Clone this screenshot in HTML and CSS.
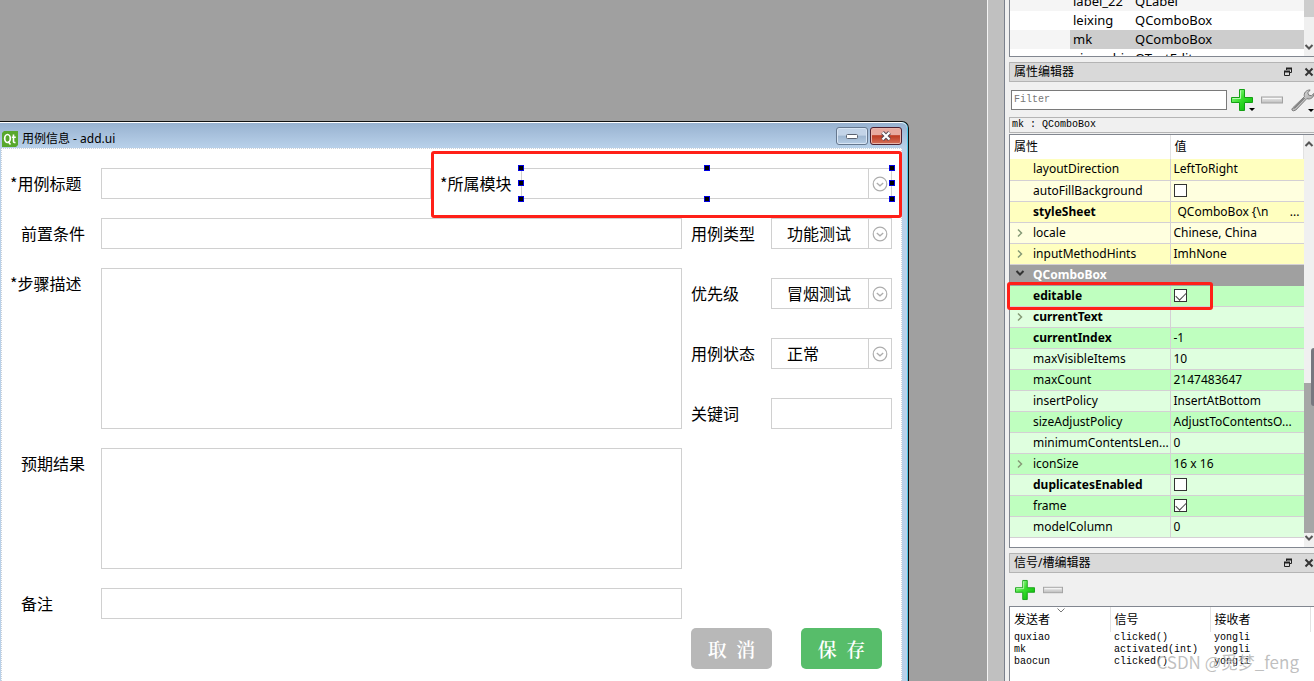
FILE: index.html
```
<!DOCTYPE html>
<html lang="zh-CN">
<head>
<meta charset="utf-8">
<title>用例信息 - add.ui</title>
<link rel="stylesheet" href="styles.css">
</head>
<body>
<svg class="defs" aria-hidden="true">
  <defs>
    <linearGradient id="green" x1="0" y1="0" x2="1" y2="1"><stop offset="0" stop-color="#b5ffb0"/><stop offset=".45" stop-color="#3be02f"/><stop offset="1" stop-color="#00b400"/></linearGradient>
    <linearGradient id="silver" x1="0" y1="0" x2="0" y2="1"><stop offset="0" stop-color="#eeeeee"/><stop offset="1" stop-color="#bdbdbd"/></linearGradient>
    <linearGradient id="steel" x1="0" y1="0" x2="1" y2="1"><stop offset="0" stop-color="#f4f4f4"/><stop offset="1" stop-color="#8c8c8c"/></linearGradient>
  </defs>
  <symbol id="plus" viewBox="0 0 22 22"><path d="M8.500.5h5v8h8v5h-8v8h-5v-8h-8v-5h8z" fill="url(#green)" stroke="#14a014"/><path d="M9.500 1.500v8h-8" fill="none" stroke="#d0ffcc" opacity=".8"/></symbol>
  <symbol id="minus" viewBox="0 0 22 8"><rect x=".5" y="1" width="21" height="6" fill="url(#silver)" stroke="#a2a2a2"/><path d="M2 2.500h18" stroke="#f8f8f8"/></symbol>
  <symbol id="float" viewBox="0 0 10 10"><path d="M3.500 3V1.500h5v4H7M1.500 4.500h5v4h-5z" fill="none" stroke="#222"/><path d="M3 1.500h6M1 4.500h6" stroke="#222" stroke-width="2"/></symbol>
  <symbol id="close" viewBox="0 0 10 10"><path d="M1.500 1.500l7 7m0-7l-7 7" stroke="#333" stroke-width="2"/></symbol>
  <symbol id="down" viewBox="0 0 10 10"><path d="M1.500 3L5 6.500 8.500 3" fill="none" stroke="currentColor" stroke-width="2"/></symbol>
  <symbol id="up" viewBox="0 0 10 10"><path d="M1.500 7L5 3.500 8.500 7" fill="none" stroke="currentColor" stroke-width="2"/></symbol>
  <symbol id="right" viewBox="0 0 10 10"><path d="M3 1.500L6.500 5 3 8.500" fill="none" stroke="currentColor" stroke-width="1.500"/></symbol>
  <symbol id="circle-down" viewBox="0 0 16 16"><circle cx="8" cy="8" r="6.800" fill="none" stroke="#adadad" stroke-width="1.200"/><path d="M4.800 7L8 9.800 11.200 7" fill="none" stroke="#adadad" stroke-width="1.300"/></symbol>
</svg>
<div class="page">
  <main class="canvas">
    <section class="window">
      <header class="titlebar">
        <svg class="logo" viewBox="0 0 16 16"><path d="M2 0h14v14l-2 2H0V2z" fill="#58a82d"/><ellipse cx="5.500" cy="7.500" rx="2.800" ry="4" fill="none" stroke="#fff" stroke-width="1.700"/><path d="M6 10.500l2.500 3M11.500 3.500v7q0 1.300 2 1M9.800 6.200h4" fill="none" stroke="#fff" stroke-width="1.600"/></svg>
        <h1>用例信息 - add.ui</h1>
        <button class="winbtn" aria-label="最小化"><svg width="12" height="8" viewBox="0 0 12 8"><rect x=".5" y="2.500" width="11" height="4" rx="1" fill="#fff" stroke="#5a6270"/></svg></button>
        <button class="winbtn winbtn-close" aria-label="关闭"><svg width="12" height="10" viewBox="0 0 12 10"><path d="M2.500 1.500l7 7m0-7l-7 7" stroke="#554a55" stroke-width="4"/><path d="M2.500 1.500l7 7m0-7l-7 7" stroke="#fff" stroke-width="2.200"/></svg></button>
      </header>
      <form class="form">
        <div class="row">
          <label class="label starred" for="title">*用例标题</label>
          <input class="field" id="title" type="text">
          <div class="module">
            <label class="module-label" for="mk">*所属模块</label>
            <div class="combo selected">
              <select id="mk"><option></option></select>
              <span class="drop"><svg><use href="#circle-down"/></svg></span>
              <i class="handle t l"></i><i class="handle t c"></i><i class="handle t r"></i>
              <i class="handle m l"></i><i class="handle m r"></i>
              <i class="handle b l"></i><i class="handle b c"></i><i class="handle b r"></i>
            </div>
            <div class="mark mark-module"></div>
          </div>
        </div>
        <div class="columns">
          <div class="main-column">
            <div class="row"><label class="label" for="pre">前置条件</label><input class="field" id="pre" type="text"></div>
            <div class="row"><label class="label starred" for="steps">*步骤描述</label><textarea class="field steps" id="steps"></textarea></div>
            <div class="row"><label class="label" for="expect">预期结果</label><textarea class="field expect" id="expect"></textarea></div>
            <div class="row"><label class="label" for="note">备注</label><input class="field" id="note" type="text"></div>
          </div>
          <div class="side-column">
            <div class="row"><label class="side-label" for="leixing">用例类型</label><div class="combo"><select id="leixing"><option>功能测试</option></select><span class="drop"><svg><use href="#circle-down"/></svg></span></div></div>
            <div class="row"><label class="side-label" for="level">优先级</label><div class="combo"><select id="level"><option>冒烟测试</option></select><span class="drop"><svg><use href="#circle-down"/></svg></span></div></div>
            <div class="row"><label class="side-label" for="state">用例状态</label><div class="combo"><select id="state"><option>正常</option></select><span class="drop"><svg><use href="#circle-down"/></svg></span></div></div>
            <div class="row"><label class="side-label" for="keyword">关键词</label><input class="field" id="keyword" type="text"></div>
            <div class="actions"><button type="button" class="action cancel">取&nbsp; 消</button><button type="button" class="action save">保&nbsp; 存</button></div>
          </div>
        </div>
      </form>
    </section>
  </main>
  <div class="splitter"></div>
  <aside class="dock">
    <section class="tree">
      <table>
        <tr><td></td><td>label_22</td><td>QLabel</td></tr>
        <tr><td></td><td>leixing</td><td>QComboBox</td></tr>
        <tr class="current"><td></td><td>mk</td><td>QComboBox</td></tr>
        <tr><td></td><td>xiangshi</td><td>QTextEdit</td></tr>
      </table>
      <div class="scroll tree-scroll"><span class="thumb"></span><svg><use href="#down"/></svg></div>
    </section>

    <header class="dock-title"><h2>属性编辑器</h2><button aria-label="浮动"><svg><use href="#float"/></svg></button><button aria-label="关闭"><svg><use href="#close"/></svg></button></header>
    <div class="toolbar">
      <input class="filter" type="text" placeholder="Filter" aria-label="Filter">
      <button class="menu-tool" aria-label="添加"><svg class="plus"><use href="#plus"/></svg></button>
      <button aria-label="移除"><svg class="minus"><use href="#minus"/></svg></button>
      <button class="menu-tool wrench-tool" aria-label="设置"><svg class="wrench" viewBox="0 0 24 24"><path d="M2 20L14 8.500C13 5 15.500 1.500 20 1.500L17.500 4.500 18.500 7 21.500 7.500 24 5C24 9.500 20 12 16.500 10.500L5 22.500Q2 24 1 22.500Q.5 21.500 2 20z" fill="url(#steel)" stroke="#777"/><path d="M3 21l11-11" stroke="#444"/></svg></button>
    </div>
    <p class="object mono">mk : QComboBox</p>
    <section class="props">
      <table>
        <colgroup><col class="name-col"><col></colgroup>
        <thead><tr><th>属性</th><th>值</th></tr></thead>
        <tbody class="yellow">
          <tr><th>layoutDirection</th><td>LeftToRight</td></tr>
          <tr><th>autoFillBackground</th><td><input type="checkbox" aria-label="autoFillBackground"></td></tr>
          <tr class="changed"><th>styleSheet</th><td><span class="style-value"><span>QComboBox {\n</span><span>...</span></span></td></tr>
          <tr><th><svg><use href="#right"/></svg>locale</th><td>Chinese, China</td></tr>
          <tr><th><svg><use href="#right"/></svg>inputMethodHints</th><td>ImhNone</td></tr>
        </tbody>
        <tbody class="green">
          <tr class="group"><th colspan="2"><svg><use href="#down"/></svg>QComboBox</th></tr>
          <tr class="changed"><th class="marked">editable<span class="mark mark-editable"></span></th><td><input type="checkbox" aria-label="editable" checked></td></tr>
          <tr class="changed"><th><svg><use href="#right"/></svg>currentText</th><td></td></tr>
          <tr class="changed"><th>currentIndex</th><td>-1</td></tr>
          <tr><th>maxVisibleItems</th><td>10</td></tr>
          <tr><th>maxCount</th><td>2147483647</td></tr>
          <tr><th>insertPolicy</th><td>InsertAtBottom</td></tr>
          <tr><th>sizeAdjustPolicy</th><td>AdjustToContentsO...</td></tr>
          <tr><th>minimumContentsLen...</th><td>0</td></tr>
          <tr><th><svg><use href="#right"/></svg>iconSize</th><td>16 x 16</td></tr>
          <tr class="changed"><th>duplicatesEnabled</th><td><input type="checkbox" aria-label="duplicatesEnabled"></td></tr>
          <tr><th>frame</th><td><input type="checkbox" aria-label="frame" checked></td></tr>
          <tr><th>modelColumn</th><td>0</td></tr>
        </tbody>
      </table>
      <div class="scroll props-scroll"><svg><use href="#up"/></svg><span class="thumb"></span><svg><use href="#down"/></svg><span class="outer-thumb"></span></div>
    </section>

    <header class="dock-title signal-title"><h2>信号/槽编辑器</h2><button aria-label="浮动"><svg><use href="#float"/></svg></button><button aria-label="关闭"><svg><use href="#close"/></svg></button></header>
    <div class="toolbar signal-toolbar">
      <button aria-label="添加"><svg class="plus"><use href="#plus"/></svg></button>
      <button aria-label="移除"><svg class="minus"><use href="#minus"/></svg></button>
    </div>
    <section class="signals">
      <table>
        <thead><tr><th>发送者<svg class="sort" viewBox="0 0 8 5"><path d="M.5.5L4 4 7.500.5" fill="none" stroke="#777"/></svg></th><th>信号</th><th>接收者</th><th></th></tr></thead>
        <tbody class="mono">
          <tr><td>quxiao</td><td>clicked()</td><td>yongli</td><td></td></tr>
          <tr><td>mk</td><td>activated(int)</td><td>yongli</td><td></td></tr>
          <tr><td>baocun</td><td>clicked()</td><td>yongli</td><td></td></tr>
        </tbody>
      </table>
    </section>
  </aside>
  <div class="watermark">CSDN @觅梦_feng</div>
</div>
</body>
</html>
```
FILE: styles.css
```
* { box-sizing: border-box; }
body {
  margin: 0;
  font: 13px/20px "Noto Sans", "Noto Sans CJK SC", sans-serif;
  color: #000;
  background: #f0f0f0;
}
h1, h2, p { margin: 0; font-size: 12px; font-weight: 400; }
button { padding: 0; border: 0; background: none; font: inherit; }
svg { display: block; flex: none; }
table { border-collapse: collapse; table-layout: fixed; width: 100%; }
th, td { padding: 0; font-weight: 400; text-align: left; white-space: nowrap; }
.defs { position: absolute; width: 0; height: 0; }
.mono { font-family: "Liberation Mono", monospace; font-size: 10px; }

.page { display: flex; height: 100vh; position: relative; overflow: hidden; }
.canvas { flex: 1; position: relative; background: #a0a0a0; overflow: hidden; }
.splitter {
  flex: 0 0 18px;
  background: #c0c0c0;
  border-left: 1px solid #f4f4f4;
  border-right: 1px solid #7a808c;
}

/* form window */
.window {
  position: absolute;
  top: 121px; left: 0; right: 78px; bottom: 0;
  display: flex;
  flex-direction: column;
  padding: 0 6px 0 1px;
  background: #b9d1ea;
  border: solid #111;
  border-width: 1px 1px 0 0;
  border-radius: 0 7px 0 0;
  box-shadow: inset -1px 1px #50c8e8;
}
.titlebar {
  flex: 0 0 26px;
  display: flex;
  align-items: flex-end;
  gap: 2px;
  margin: 0 -5px 0 -1px;
  padding: 0 5px 1px 2px;
  background: linear-gradient(#98b2d0, #b9d1ea);
  border-top: 1px solid #fff;
  border-radius: 0 6px 0 0;
}
.titlebar h1 { flex: 1; padding-left: 2px; line-height: 16px; }
.logo { width: 16px; height: 16px; }
.winbtn {
  width: 32px; height: 18px;
  margin-bottom: 2px;
  display: grid; place-items: center;
  border: 1px solid #66788f;
  border-radius: 3px;
  background: linear-gradient(#c3d4e8 45%, #9eb6d0 50%, #b6cde5);
  box-shadow: inset 0 0 0 1px #d8e6f5;
}
.winbtn-close {
  border-color: #4f2030;
  background: linear-gradient(#e8a99f 42%, #bd3a22 48%, #d4705a);
  box-shadow: inset 0 0 0 1px #e9b5aa;
}
.form {
  flex: 1;
  background: #fff;
  border: dotted #ccd2da;
  border-width: 1px 1px 0 1px;
  padding: 19px 9px 0 0;
  font: 16px/31px "Noto Sans CJK SC", sans-serif;
}
.row { display: flex; align-items: flex-start; }
.label { flex: 0 0 99px; padding-left: 19px; }
.starred { padding-left: 8px; }
.field {
  flex: 1;
  min-width: 0;
  height: 31px;
  padding: 0 8px;
  border: 1px solid #d0d0d0;
  background: #fff;
  font: inherit;
  resize: none;
}
.steps { height: 161px; }
.expect { height: 121px; }
.module { flex: 0 0 461px; position: relative; display: flex; }
.module-label { flex: 0 0 90px; padding-left: 9px; }
.combo { flex: 1; min-width: 0; display: flex; height: 31px; border: 1px solid #d0d0d0; }
.combo select {
  flex: 1;
  min-width: 0;
  padding: 0 0 0 15px;
  border: 0;
  appearance: none;
  background: #fff;
  font: inherit;
  line-height: 27px;
  color: #000;
}
.drop { flex: 0 0 23px; display: grid; place-items: center; border-left: 1px solid #d0d0d0; }
.drop svg { width: 16px; height: 16px; }
.selected { position: relative; }
.handle { position: absolute; width: 6px; height: 6px; background: #000; border: 1px solid #0000e0; }
.handle.t { top: -4px; }
.handle.m { top: 11px; }
.handle.b { bottom: -4px; }
.handle.l { left: -4px; }
.handle.c { left: 50%; margin-left: -3px; }
.handle.r { right: -4px; }
.mark { position: absolute; border: 3px solid #ff2018; border-radius: 3px; }
.mark-module { top: -17px; bottom: -19px; left: 0; right: -10px; }
.columns { display: flex; gap: 9px; padding-top: 19px; }
.main-column { flex: 1; min-width: 0; display: flex; flex-direction: column; gap: 19px; }
.side-column { flex: 0 0 201px; min-width: 0; display: flex; flex-direction: column; gap: 29px; }
.side-label { flex: 0 0 80px; }
.actions { display: flex; justify-content: space-between; padding: 170px 10px 0 0; }
.action {
  width: 81px; height: 41px;
  border-radius: 5px;
  color: #fff;
  font: 600 19px/40px "Noto Serif CJK SC", "Noto Sans CJK SC", serif;
}
.cancel { background: #b8b8b8; }
.save { background: #57bd6a; }

/* dock */
.dock { flex: 0 0 309px; padding-left: 4px; display: flex; flex-direction: column; overflow: hidden; }
.scroll { flex: 0 0 10px; display: flex; flex-direction: column; align-items: center; background: #f0f0f0; color: #555; }
.scroll svg { width: 10px; height: 10px; }
.tree {
  flex: 0 0 57px;
  display: flex;
  overflow: hidden;
  background: #fff;
  border: solid #828790;
  border-width: 0 0 1px 1px;
}
.tree table { flex: 1; width: 0; margin-top: -8px; align-self: flex-start; }
.tree tr { height: 19px; line-height: 19px; }
.tree tr:first-child { background: #f5f5f5; }
.tree td:nth-child(1) { width: 60px; }
.tree td:nth-child(2) { width: 62px; padding-left: 3px; overflow: hidden; }
.tree td:nth-child(3) { padding-left: 3px; }
.current td { background: #cdcdcd; }
.current td:first-child { background: #f5f5f5; }
.tree-scroll { justify-content: space-between; padding-bottom: 4px; }
.tree-scroll .thumb { width: 100%; height: 17px; background: #cdcdcd; }
.dock-title {
  flex: 0 0 20px;
  display: flex;
  align-items: center;
  gap: 11px;
  margin-top: 5px;
  padding-left: 4px;
  background: #d9d9d9;
  border: 1px solid #b4b4b4;
  border-right: 0;
}
.dock-title h2 { flex: 1; line-height: 18px; }
.dock-title svg { width: 10px; height: 10px; }
.toolbar { flex: 0 0 35px; display: flex; align-items: center; gap: 8px; padding-left: 2px; }
.filter {
  flex: 1;
  min-width: 0;
  height: 20px;
  margin-right: -4px;
  padding: 0 2px;
  border: 1px solid #7a7a7a;
  background: #fff;
  font: 10px "Liberation Mono", monospace;
}
.filter::placeholder { color: #777; }
.plus { width: 22px; height: 22px; }
.minus { width: 22px; height: 8px; }
.wrench { width: 23px; height: 24px; }
.menu-tool { position: relative; }
.menu-tool::after {
  content: "";
  position: absolute;
  right: -2px; bottom: 0;
  border: solid transparent;
  border-width: 3px 3px 0;
  border-top-color: #000;
}
.wrench-tool::after { right: 0; }
.object { flex: 0 0 16px; padding-left: 2px; line-height: 14px; border: 1px solid #b4b4b4; border-right: 0; }
.props {
  flex: 0 0 414px;
  display: flex;
  margin-top: 1px;
  background: #fff;
  border: 1px solid #828790;
  border-right: 0;
}
.props table { flex: 1; width: 0; align-self: flex-start; }
.name-col { width: 160px; }
.props thead tr { height: 24px; }
.props thead th { padding-left: 4px; font-size: 12px; border-right: 1px solid #e2e2e2; }
.props tbody { font-size: 12px; }
.props tbody tr { height: 21px; }
.props tbody th { position: relative; padding-left: 23px; border: solid #d4d0d4; border-width: 0 1px 1px 0; }
.props tbody td { padding-left: 3px; border-bottom: 1px solid #d4d0d4; }
.props tbody th svg { position: absolute; left: 5px; top: 5px; width: 10px; height: 10px; color: #879b77; }
.props .changed th { font-weight: 700; }
.yellow tr:nth-child(odd) { background: #ffffbf; }
.yellow tr:nth-child(even) { background: #ffffdf; }
.green tr:nth-child(even) { background: #bfffbf; }
.green tr:nth-child(odd) { background: #dfffdf; }
.green tr.group { background: #a0a0a0; color: #fff; }
.props .group th { font-weight: 700; border-color: #a0a0a0; }
.props .group th svg { top: 3px; color: #333; }
.style-value { display: flex; justify-content: space-between; padding: 0 4px; }
.props input {
  appearance: none;
  display: block;
  width: 13px; height: 13px;
  margin: 0;
  border: 1px solid #333;
  background: #fff;
}
.props input:checked::after {
  content: "";
  display: block;
  width: 9px; height: 5px;
  margin: 2px 1px;
  border: solid #444;
  border-width: 0 0 1px 1px;
  transform: rotate(-45deg);
}
.mark-editable { z-index: 1; top: -4px; left: -3px; width: 206px; height: 28px; }
.props-scroll { position: relative; padding: 4px 0; }
.props-scroll .thumb { width: 100%; flex: 1; margin-top: 234px; background: #a6a6a6; }
.outer-thumb { position: absolute; right: 0; top: 213px; width: 3px; height: 58px; border-radius: 3px 0 0 3px; background: #77777f; }
.signal-toolbar { flex-basis: 33px; padding-left: 6px; }
.signal-toolbar svg { width: 20px; }
.signals { flex: 1; background: #fff; border: solid #828790; border-width: 1px 0 0 1px; overflow: hidden; }
.signals th { position: relative; width: 100px; height: 25px; padding-left: 4px; font-size: 12px; border-right: 1px solid #e2e2e2; }
.signals th:last-child { width: auto; padding: 0; border: 0; }
.signals tbody td { height: 12px; padding-left: 4px; line-height: 12px; }
.sort { position: absolute; left: 47px; top: 1px; width: 8px; height: 5px; }
.watermark {
  position: absolute;
  right: 15px; bottom: 8px;
  font: 17px/22px "Noto Sans CJK SC", sans-serif;
  color: #8888;
  text-shadow: 1px 1px #fff8;
}
```
